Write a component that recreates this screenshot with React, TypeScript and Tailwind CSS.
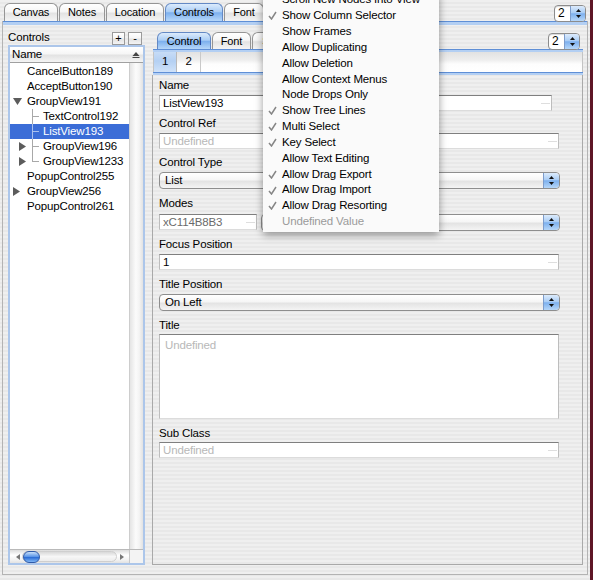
import React from "react";

const AQUA =
  "bg-[linear-gradient(180deg,#dcebfc_0%,#aacdf5_45%,#7db0ee_52%,#b6d7f9_100%)]";
const GLASS =
  "bg-[linear-gradient(180deg,#ffffff_0%,#f6f6f6_45%,#e3e3e3_55%,#f4f4f4_100%)]";
const STRIPES =
  "bg-[repeating-linear-gradient(180deg,#efefef_0px,#efefef_2px,#e8e8e8_2px,#e8e8e8_4px)]";

function Up() {
  return (
    <svg width="5" height="3" viewBox="0 0 5 3">
      <path d="M0 3 L2.5 0 L5 3 Z" fill="#111" />
    </svg>
  );
}
function Down() {
  return (
    <svg width="5" height="3" viewBox="0 0 5 3">
      <path d="M0 0 L5 0 L2.5 3 Z" fill="#111" />
    </svg>
  );
}

function Arrows({ cls }: { cls: string }) {
  return (
    <div
      className={`${cls} ${AQUA} h-full flex flex-col items-center justify-center gap-[3px]`}
    >
      <Up />
      <Down />
    </div>
  );
}

function Stepper({ cls }: { cls: string }) {
  return (
    <div
      className={`${cls} h-[17px] w-[32px] flex rounded-[4px] border border-[#8c8c8c] overflow-hidden bg-white shadow-[inset_0_1px_1px_rgba(0,0,0,0.15)] relative z-10`}
    >
      <div className="flex-1 pl-[3px] leading-[15px] text-[12px]">2</div>
      <Arrows cls="w-[15px] border-l border-[#7d9ccb]" />
    </div>
  );
}

function Tab({ label, w, sel }: { label: string; w: string; sel?: boolean }) {
  return (
    <div
      className={`${w} h-full flex items-center justify-center rounded-t-[6px] border border-b-0 text-[11px] leading-none overflow-hidden ${
        sel ? `border-[#6489c4] ${AQUA}` : `border-[#959595] ${GLASS}`
      }`}
    >
      {label}
    </div>
  );
}

function Label({ children, cls }: { children: React.ReactNode; cls: string }) {
  return <div className={`${cls} h-[14px] leading-[14px]`}>{children}</div>;
}

function Field({
  cls,
  children,
  text,
}: {
  cls: string;
  children: React.ReactNode;
  text: string;
}) {
  return (
    <div
      className={`${cls} h-[16px] bg-white border border-t-[#7f7f7f] border-x-[#bdbdbd] border-b-[#dcdcdc] pl-[3px] leading-[14px] relative ${text}`}
    >
      {children}
      <div className="absolute right-[1px] top-[7px] w-[9px] h-px bg-[#dedede]" />
    </div>
  );
}

function Popup({ cls, label }: { cls: string; label: string }) {
  return (
    <div
      className={`${cls} h-[17px] flex rounded-[4px] border border-[#8e8e8e] overflow-hidden ${GLASS}`}
    >
      <div className="flex-1 pl-[5px] leading-[15px]">{label}</div>
      <Arrows cls="w-[16px] border-l border-[#7d9ccb] rounded-r-[3px]" />
    </div>
  );
}

function TriRight() {
  return (
    <svg width="7" height="9" viewBox="0 0 7 9">
      <path d="M0 0 L7 4.5 L0 9 Z" fill="#5c5c5c" />
    </svg>
  );
}
function TriDown() {
  return (
    <svg width="9" height="7" viewBox="0 0 9 7">
      <path d="M0 0 L9 0 L4.5 7 Z" fill="#5c5c5c" />
    </svg>
  );
}

type Row = {
  t: string;
  lvl: number;
  tri?: "down" | "right";
  sel?: boolean;
  last?: boolean;
};

const rows: Row[] = [
  { t: "CancelButton189", lvl: 0 },
  { t: "AcceptButton190", lvl: 0 },
  { t: "GroupView191", lvl: 0, tri: "down" },
  { t: "TextControl192", lvl: 1 },
  { t: "ListView193", lvl: 1, sel: true },
  { t: "GroupView196", lvl: 1, tri: "right" },
  { t: "GroupView1233", lvl: 1, tri: "right", last: true },
  { t: "PopupControl255", lvl: 0 },
  { t: "GroupView256", lvl: 0, tri: "right" },
  { t: "PopupControl261", lvl: 0 },
];

function TreeRow({ r }: { r: Row }) {
  const tri =
    r.tri === "down" ? <TriDown /> : r.tri === "right" ? <TriRight /> : null;
  return (
    <div
      className={`h-[15px] flex items-center leading-[15px] ${
        r.sel ? "bg-[#3b6dd7] text-white" : ""
      }`}
    >
      {r.lvl === 0 ? (
        <div className="w-[17px] h-full flex items-center pl-[3px]">{tri}</div>
      ) : (
        <>
          <div className="w-[9px] h-full" />
          <div className="w-[13px] h-full flex items-center">{tri}</div>
          <div className="w-[11px] h-full relative">
            <div
              className={`absolute left-0 top-0 w-px ${
                r.last ? "h-[8px]" : "h-full"
              } ${r.sel ? "bg-[#a9c0ee]" : "bg-[#a8a8a8]"}`}
            />
            <div
              className={`absolute left-0 top-[7px] w-[7px] h-px ${
                r.sel ? "bg-[#a9c0ee]" : "bg-[#a8a8a8]"
              }`}
            />
          </div>
        </>
      )}
      <span className="whitespace-nowrap">{r.t}</span>
    </div>
  );
}

const menuItems: [string, boolean, boolean?][] = [
  ["Scroll New Nodes Into View", false],
  ["Show Column Selector", true],
  ["Show Frames", false],
  ["Allow Duplicating", false],
  ["Allow Deletion", false],
  ["Allow Context Menus", false],
  ["Node Drops Only", false],
  ["Show Tree Lines", true],
  ["Multi Select", true],
  ["Key Select", true],
  ["Allow Text Editing", false],
  ["Allow Drag Export", true],
  ["Allow Drag Import", true],
  ["Allow Drag Resorting", true],
  ["Undefined Value", false, true],
];

function Check() {
  return (
    <svg width="9" height="9" viewBox="0 0 9 9">
      <path
        d="M1 5 L3.5 8 L8 1"
        stroke="#868686"
        strokeWidth="1.5"
        fill="none"
      />
    </svg>
  );
}

export default function App() {
  return (
    <div className="relative w-[593px] h-[580px] overflow-hidden flex font-['Liberation_Sans',Arial,sans-serif] text-[11.5px] tracking-[-0.15px] text-black">
      <div className={`w-[590px] h-full flex flex-col ${STRIPES}`}>
        {/* top tab row */}
        <div className="h-[21px] flex items-start pl-[4px]">
          <div className="h-[18px] mt-[3px] flex gap-[1px]">
            <Tab label="Canvas" w="w-[54px]" />
            <Tab label="Notes" w="w-[46px]" />
            <Tab label="Location" w="w-[58px]" />
            <Tab label="Controls" w="w-[58px]" sel />
            <Tab label="Font" w="w-[40px]" />
          </div>
          <Stepper cls="ml-auto mt-[5px] mr-[4px]" />
        </div>

        {/* outer tab panel */}
        <div className="ml-[2px] w-[586px] border-x border-b border-[#b3b3b3] pb-[9px]">
          <div className="h-[4px] border-t border-[#5f8fd6] bg-[#b3cff3]" />
          <div className="flex">
            {/* left column */}
            <div className="ml-[5px] w-[137px] flex flex-col">
              <div className="h-[20px] flex items-start">
                <div className="mt-[5px] leading-[14px]">Controls</div>
                <div className="ml-auto mr-[3px] mt-[7px] flex gap-[3px]">
                  <div
                    className={`w-[13px] h-[13px] border border-[#9a9a9a] flex items-center justify-center text-[11px] leading-none ${GLASS}`}
                  >
                    +
                  </div>
                  <div
                    className={`w-[14px] h-[13px] border border-[#9a9a9a] flex items-center justify-center text-[11px] leading-none ${GLASS}`}
                  >
                    -
                  </div>
                </div>
              </div>
              <div className="h-[520px] border-2 border-[#acc6ea] bg-white flex flex-col">
                <div
                  className={`h-[16px] flex border-b border-[#a0a0a0] ${GLASS}`}
                >
                  <div className="flex-1 pl-[2px] leading-[15px]">Name</div>
                  <div className="w-[14px] flex flex-col items-center justify-center gap-[1px]">
                    <svg width="8" height="6" viewBox="0 0 8 6">
                      <path d="M0.5 4 L4 0 L7.5 4 Z" fill="#444" />
                      <rect x="0.5" y="5" width="7" height="1" fill="#444" />
                    </svg>
                  </div>
                </div>
                <div className="flex-1 flex">
                  <div className="w-[119px] pt-[1px]">
                    {rows.map((r) => (
                      <TreeRow key={r.t} r={r} />
                    ))}
                  </div>
                  <div className="w-[14px] border-l border-[#cdcdcd] bg-[linear-gradient(90deg,#e4e4e4_0%,#fbfbfb_45%,#f4f4f4_70%,#e2e2e2_100%)]" />
                </div>
                <div className="h-[14px] border-t border-[#b9b9b9] flex bg-[linear-gradient(180deg,#dcdcdc_0%,#ffffff_40%,#f2f2f2_75%,#e2e2e2_100%)]">
                  <div className="w-[12px] flex items-center justify-end pr-[2px]">
                    <svg width="4" height="6" viewBox="0 0 4 6">
                      <path d="M4 0 L0 3 L4 6 Z" fill="#777" />
                    </svg>
                  </div>
                  <div className="flex-1 flex items-center rounded-full border border-[#cfcfcf] my-[1px] bg-[linear-gradient(180deg,#d9d9d9_0%,#f7f7f7_50%,#ececec_100%)]">
                    <div className="w-[17px] h-[12px] rounded-full border border-[#2f5aa8] bg-[linear-gradient(180deg,#c9e0fb_0%,#5f98e8_45%,#2f6fd6_55%,#7fb6f5_100%)]" />
                  </div>
                  <div className="w-[12px] flex items-center pl-[3px]">
                    <svg width="4" height="6" viewBox="0 0 4 6">
                      <path d="M0 0 L4 3 L0 6 Z" fill="#777" />
                    </svg>
                  </div>
                  <div className="w-[14px] border-l border-[#c8c8c8] bg-[#f3f3f3]" />
                </div>
              </div>
            </div>

            {/* right column */}
            <div className="ml-[7px] w-[431px] flex flex-col">
              <div className="h-[24px] flex items-start pl-[5px]">
                <div className="h-[17px] mt-[7px] flex gap-[1px]">
                  <Tab label="Control" w="w-[54px]" sel />
                  <Tab label="Font" w="w-[39px]" />
                  <Tab label="Style" w="w-[44px]" />
                </div>
                <Stepper cls="ml-auto mt-[8px] mr-[3px]" />
              </div>
              <div className="h-[3px] border-t border-[#5f8fd6] bg-[#b3cff3] ml-[1px]" />
              <div className="h-[20px] ml-[1px] flex border-x border-[#c4c4c4] bg-[linear-gradient(180deg,#e2e2e2_0%,#eeeeee_40%,#fdfdfd_60%,#ffffff_100%)]">
                <div
                  className={`w-[23px] h-full flex items-center justify-center border-r border-[#b9b9b9] bg-[linear-gradient(180deg,#c7dcf6_0%,#b4d0f3_45%,#cfe2f9_100%)]`}
                >
                  1
                </div>
                <div className="w-[24px] h-full flex items-center justify-center border-r border-[#c9c9c9]">
                  2
                </div>
              </div>
              <div className="h-[3px] border-t border-[#5f8fd6] bg-[#b3cff3] ml-[1px]" />
              <div className="h-[490px] border-l border-r border-b border-[#a9a9a9] flex flex-col pl-[6px] pt-[3px]">
                <Label cls="">Name</Label>
                <Field cls="mt-[3px] w-[393px]" text="">
                  ListView193
                </Field>
                <Label cls="mt-[5px]">Control Ref</Label>
                <Field cls="mt-[3px] w-[400px]" text="text-[#b8b8b8]">
                  Undefined
                </Field>
                <Label cls="mt-[6px]">Control Type</Label>
                <Popup cls="mt-[3px] w-[401px]" label="List" />
                <Label cls="mt-[7px]">Modes</Label>
                <div className="mt-[4px] flex items-start gap-[4px]">
                  <Field cls="w-[98px]" text="text-[#6a6a6a]">
                    xC114B8B3
                  </Field>
                  <Popup cls="w-[299px]" label="" />
                </div>
                <Label cls="mt-[6px]">Focus Position</Label>
                <Field cls="mt-[3px] w-[400px]" text="">
                  1
                </Field>
                <Label cls="mt-[7px]">Title Position</Label>
                <Popup cls="mt-[3px] w-[401px]" label="On Left" />
                <Label cls="mt-[7px]">Title</Label>
                <div className="mt-[2px] w-[400px] h-[85px] bg-white border border-t-[#7f7f7f] border-x-[#bdbdbd] border-b-[#dcdcdc] pl-[5px] pt-[3px] leading-[14px] text-[#b8b8b8]">
                  Undefined
                </div>
                <Label cls="mt-[7px]">Sub Class</Label>
                <Field cls="mt-[2px] w-[400px]" text="text-[#b8b8b8]">
                  Undefined
                </Field>
              </div>
            </div>
          </div>
        </div>
      </div>
      <div className="w-[3px] h-full bg-[#5e1626]" />

      {/* popup menu overlay */}
      <div className="absolute left-[263px] top-[-8px] w-[176px] pb-[2px] bg-[#fafafa] shadow-[0_3px_8px_rgba(0,0,0,0.4)]">
        {menuItems.map(([label, checked, disabled]) => (
          <div key={label} className="h-[15.85px] flex items-center">
            <div className="w-[19px] pl-[5px] flex items-center">
              {checked ? <Check /> : null}
            </div>
            <span
              className={`whitespace-nowrap ${
                disabled ? "text-[#9a9a9a]" : "text-black"
              }`}
            >
              {label}
            </span>
          </div>
        ))}
      </div>
    </div>
  );
}
